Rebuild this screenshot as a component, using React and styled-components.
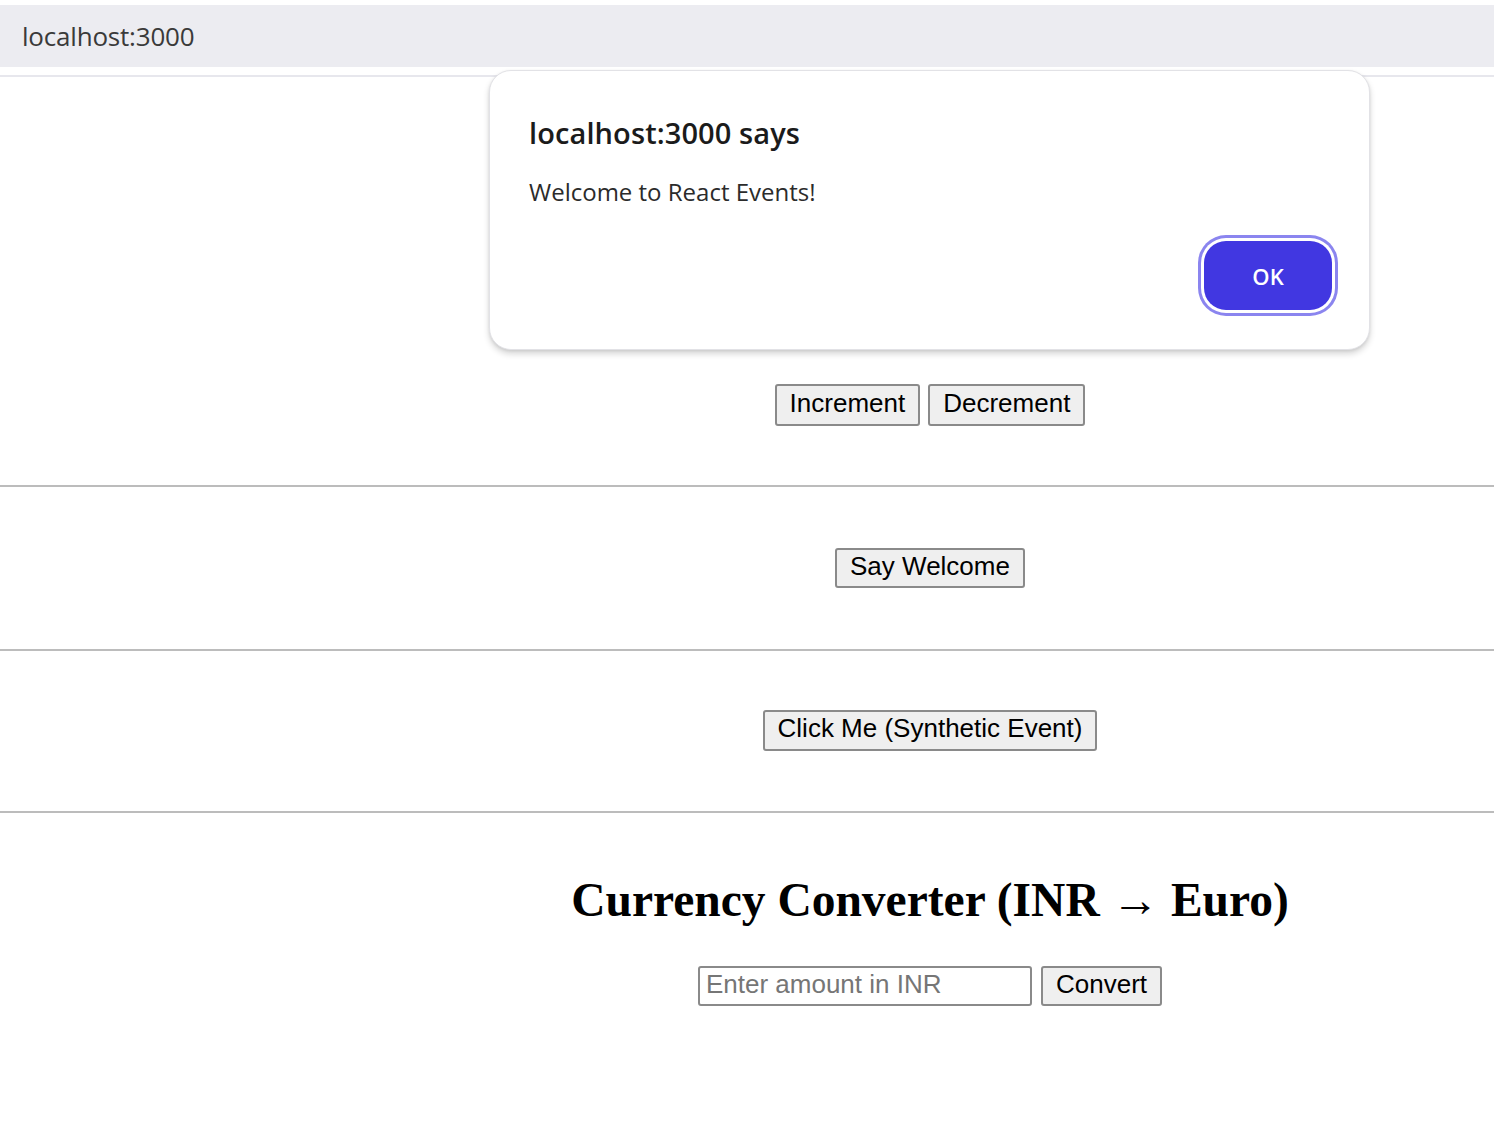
import styled, { createGlobalStyle } from "styled-components";

const GlobalStyle = createGlobalStyle`
  html, body {
    margin: 0;
    padding: 0;
    background: #ffffff;
  }
  body {
    font-family: "Liberation Serif", "Times New Roman", serif;
    overflow: hidden;
  }
`;

const Viewport = styled.div`
  position: relative;
  width: 100%;
  height: 1128px;
  overflow: hidden;
`;

const Chrome = styled.div`
  padding-top: 5px;
  border-bottom: 2px solid #e7e7ed;
  padding-bottom: 8px;
`;

const AddressBar = styled.div`
  height: 62px;
  background: #ececf1;
  display: flex;
  align-items: center;
  padding-left: 22px;
  font-family: "Open Sans", "Noto Sans", sans-serif;
  font-size: 26px;
  letter-spacing: -0.2px;
  color: #3a3a3a;
`;

const Page = styled.div`
  width: 1860px;
`;

const Section = styled.section`
  text-align: center;
  padding: ${(p) => p.$pad};
`;

const Rule = styled.hr`
  margin: 0;
  border: none;
  height: 2px;
  background: #bcbcbc;
`;

const Button = styled.button`
  font-family: "Liberation Sans", Arial, sans-serif;
  font-size: 26px;
  line-height: 30px;
  color: #000;
  background: #efefef;
  border: 2px solid #8a8a8a;
  border-radius: 3px;
  padding: 1px 13px 6px;
  margin: 0 4px;
  height: ${(p) => p.$h || "42px"};
  vertical-align: middle;
`;

const Heading = styled.h2`
  margin: 0 0 39px;
  font-size: 47.5px;
  line-height: 54px;
  font-weight: bold;
`;

const Row = styled.div`
  display: flex;
  justify-content: center;
  align-items: center;
  gap: 9px;

  & > ${Button} {
    margin: 0;
  }
`;

const AmountInput = styled.input`
  width: 334px;
  height: 40px;
  box-sizing: border-box;
  font-family: "Liberation Sans", Arial, sans-serif;
  font-size: 26px;
  padding: 0 6px 3px;
  border: 2px solid #8a8a8a;
  border-radius: 3px;
  &::placeholder {
    color: #767676;
  }
`;

const Dialog = styled.div`
  position: absolute;
  top: 70px;
  left: 489px;
  width: 881px;
  height: 280px;
  box-sizing: border-box;
  background: #fff;
  border: 1px solid #e2e2e6;
  border-radius: 22px;
  box-shadow: 0 4px 6px rgba(0, 0, 0, 0.16), 0 1px 3px rgba(0, 0, 0, 0.08);
  padding: 42px 32px 34px 39px;
  display: flex;
  flex-direction: column;
  font-family: "Open Sans", "Noto Sans", sans-serif;
`;

const DialogTitle = styled.div`
  font-size: 29px;
  font-weight: 600;
  letter-spacing: 0.1px;
  color: #1b1b1b;
  line-height: 40px;
`;

const DialogText = styled.div`
  margin-top: 23px;
  font-size: 24px;
  letter-spacing: 0;
  color: #2b2b2b;
  line-height: 32px;
`;

const DialogActions = styled.div`
  margin-top: auto;
  display: flex;
  justify-content: flex-end;
`;

const OkButton = styled.button`
  width: 128px;
  height: 69px;
  margin-right: 5px;
  margin-bottom: 5px;
  border: none;
  border-radius: 22px;
  background: #4137e1;
  color: #fff;
  font-family: "Open Sans", "Noto Sans", sans-serif;
  font-size: 22px;
  font-weight: 600;
  box-shadow: 0 0 0 3px #ffffff, 0 0 0 6px #8b85ef;
`;

export default function App() {
  return (
    <>
      <GlobalStyle />
      <Viewport>
        <Chrome>
          <AddressBar>localhost:3000</AddressBar>
        </Chrome>
        <Page>
          <Section $pad="307px 0 59px">
            <Button>Increment</Button>
            <Button>Decrement</Button>
          </Section>
          <Rule />
          <Section $pad="61px 0 61px">
            <Button $h="40px">Say Welcome</Button>
          </Section>
          <Rule />
          <Section $pad="59px 0 60px">
            <Button $h="41px">Click Me (Synthetic Event)</Button>
          </Section>
          <Rule />
          <Section $pad="60px 0 0">
            <Heading>Currency Converter (INR → Euro)</Heading>
            <Row>
              <AmountInput placeholder="Enter amount in INR" />
              <Button $h="40px">Convert</Button>
            </Row>
          </Section>
        </Page>
        <Dialog>
          <DialogTitle>localhost:3000 says</DialogTitle>
          <DialogText>Welcome to React Events!</DialogText>
          <DialogActions>
            <OkButton>OK</OkButton>
          </DialogActions>
        </Dialog>
      </Viewport>
    </>
  );
}
